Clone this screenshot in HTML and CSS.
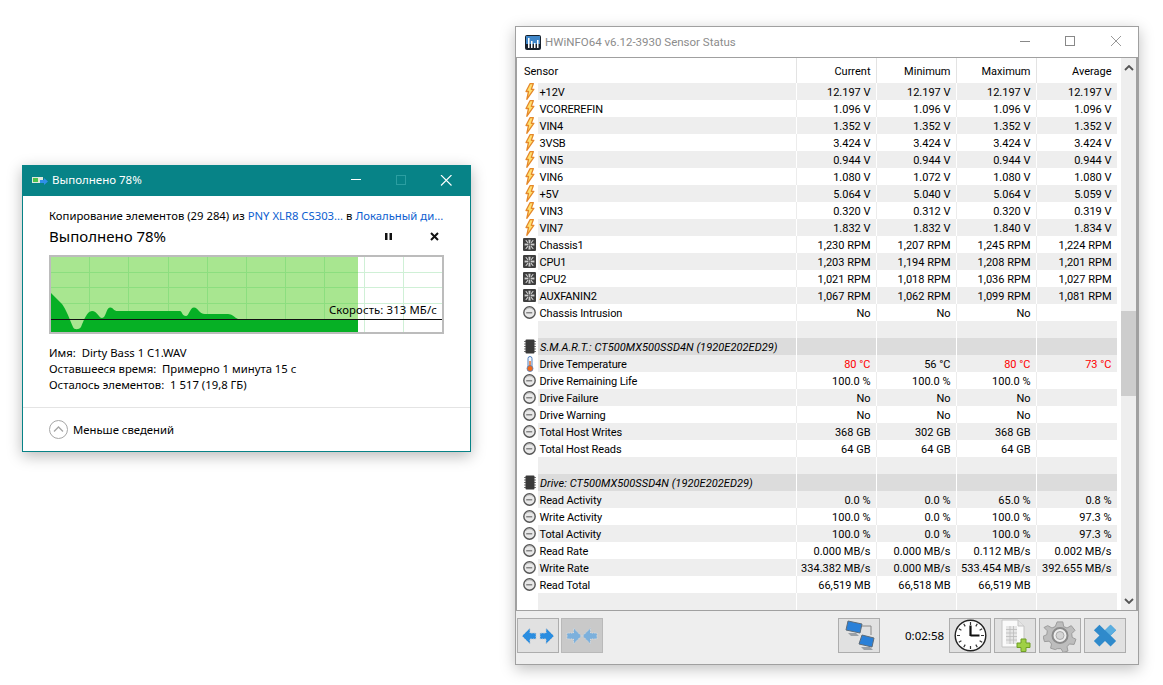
FILE: index.html
```html
<!DOCTYPE html>
<html lang="ru">
<head>
<meta charset="utf-8">
<title>Desktop</title>
<link rel="stylesheet" href="styles.css">
</head>
<body>
<svg class="defs" width="0" height="0" aria-hidden="true">
  <symbol id="bolt" viewBox="0 0 10 17"><path d="M5 .7 1 8.500h2.500L1.800 16.300 8.800 6.300H6.300L8.300 .7z" fill="#ffe070" stroke="#e5882a" stroke-width="1.300" stroke-linejoin="round"/></symbol>
  <symbol id="fan" viewBox="0 0 12 12"><rect width="12" height="12" rx="1" fill="#3f3f3f"/><g fill="#cfcfcf"><path d="M5 1.500h2L6.600 5H5.400zM5 10.500h2L6.600 7H5.400zM1.500 5v2L5 6.600V5.400zM10.500 5v2L7 6.600V5.400z"/><path d="M2 2h1.500L5 4.500 4.500 5zM10 2H8.500L7 4.500 7.500 5zM2 10h1.500L5 7.500 4.500 7zM10 10H8.500L7 7.500 7.500 7z"/></g><circle cx="6" cy="6" r="1" fill="#777"/></symbol>
  <symbol id="gauge" viewBox="0 0 13 13"><circle cx="6.500" cy="6.500" r="5.700" fill="#e8e8e8" stroke="#565656" stroke-width="1.400"/><path d="M3.200 6.800h6" stroke="#666" stroke-width="1.100"/><path d="M3 3.300a5 5 0 0 1 7 0" fill="none" stroke="#aaa" stroke-width=".9"/></symbol>
  <symbol id="chip" viewBox="0 0 12 15"><path d="M0 2.500h12M0 5h12M0 7.500h12M0 10h12M0 12.500h12" stroke="#777"/><rect x="1.500" y=".5" width="9" height="14" rx="1" fill="#3a3a3a"/></symbol>
  <symbol id="thermo" viewBox="0 0 8 16"><rect x="2" y=".5" width="4" height="11" rx="2" fill="#f2f6fb" stroke="#4f7fbe"/><rect x="3.300" y="5" width="1.400" height="7" fill="#e8641a"/><circle cx="4" cy="12.500" r="3" fill="#ef6a1c" stroke="#4f7fbe" stroke-width=".8"/></symbol>
</svg>

<section class="copy-win">
  <header class="copy-title">
    <svg class="copy-ico" width="16" height="10" viewBox="0 0 16 10"><rect y="1" width="11" height="6" fill="#dfe8dc"/><rect x="1" y="2" width="5" height="4" fill="#4cc24c"/><path d="M8 4h4V2l4 3.500-4 3.500V7H8z" fill="#2f8fe8"/></svg>
    <span class="copy-title-text">Выполнено 78%</span>
    <svg class="copy-ctl" width="101" height="12" viewBox="0 0 101 12"><path d="M0 4.500h10" stroke="#fff"/><rect x="45.500" y=".5" width="9" height="9" fill="none" stroke="#2b9ea1"/><path d="M90 0l10.500 10.500M100.500 0 90 10.500" stroke="#fff" stroke-width="1.100"/></svg>
  </header>
  <div class="copy-body">
    <div class="copy-line">Копирование элементов (29 284) из <span class="link">PNY XLR8 CS303...</span> в <span class="link">Локальный ди...</span></div>
    <div class="copy-head">
      <span class="copy-pct">Выполнено 78%</span>
      <svg class="pause-stop" width="55" height="9" viewBox="0 0 55 9"><path d="M0 1h2.500v7H0zM4.500 1H7v7H4.500z" fill="#111"/><path d="M46 1l7 7M53 1l-7 7" stroke="#111" stroke-width="2"/></svg>
    </div>
    <div class="chart">
      <svg class="chart-svg" width="391" height="75" viewBox="51 257 391 75">
        <rect x="51" y="257" width="391" height="75" fill="#fff"/>
        <rect x="51" y="257" width="307" height="75" fill="#a8e690"/>
        <path d="M89.500 257v75M128.500 257v75M168.500 257v75M207.500 257v75M246.500 257v75M285.500 257v75M324.500 257v75M51 272.500h307M51 287.500h307M51 303.500h307" stroke="#8cde7f" fill="none"/>
        <path d="M364.500 257v75M403.500 257v75M358 272.500h84M358 287.500h84M358 303.500h84" stroke="#cff0d6" fill="none"/>
        <path d="M51 293L62 304C66 309 70 320 73 327C74 330 79 330 81 327C84 320 87 311 92 311C97 311 99 318 102 318C106 318 106 308 110 307.500C113 307 113 311 118 311H180C182 311 182 316 186 316C189 316 190 307.500 194 307.500C198 307.500 199 314 205 314H228C232 314 234 317 238 319H358V332H51z" fill="#06b025"/>
        <path d="M51 319.500h391" stroke="#111"/>
      </svg>
      <span class="speed">Скорость: 313 МБ/с</span>
    </div>
    <div class="info">
      <div>Имя:&nbsp; Dirty Bass 1 C1.WAV</div>
      <div>Оставшееся время:&nbsp; Примерно 1 минута 15 с</div>
      <div>Осталось элементов:&nbsp; 1 517 (19,8 ГБ)</div>
    </div>
  </div>
  <footer class="copy-foot">
    <svg width="19" height="19" viewBox="0 0 19 19"><circle cx="9.500" cy="9.500" r="9" fill="#fff" stroke="#a6a6a6"/><path d="M5 11.500l4.500-4.500 4.500 4.500" fill="none" stroke="#a6a6a6" stroke-width="1.300"/></svg>
    <span>Меньше сведений</span>
  </footer>
</section>

<section class="hw-win">
  <header class="hw-title">
    <svg class="hw-logo" width="16" height="15" viewBox="0 0 16 15"><rect width="16" height="15" rx="2" fill="#17212c"/><rect x="1" y="1" width="14" height="8" fill="#3f86c8"/><path d="M3 3h1.500v10H3zM6 6h1.500v7H6zM9 8h1.500v5H9zM12 5h1.500v8H12z" fill="#fff"/></svg>
    <span class="hw-title-text">HWiNFO64 v6.12-3930 Sensor Status</span>
    <svg class="hw-ctl" width="101" height="12" viewBox="0 0 101 12"><path d="M0 5.500h10" stroke="#888"/><rect x="45.500" y=".5" width="9" height="9" fill="none" stroke="#888"/><path d="M91 0l10 10M101 0 91 10" stroke="#999"/></svg>
  </header>
  <div class="hw-list">
    <div class="hw-table">
      <div class="row head"><span class="ic"></span><span class="nm">Sensor</span><span class="v">Current</span><span class="v">Minimum</span><span class="v">Maximum</span><span class="v">Average</span></div>
      <div class="row even"><span class="ic"><svg class="i-bolt"><use href="#bolt"/></svg></span><span class="nm">+12V</span><span class="v">12.197 V</span><span class="v">12.197 V</span><span class="v">12.197 V</span><span class="v">12.197 V</span></div>
      <div class="row"><span class="ic"><svg class="i-bolt"><use href="#bolt"/></svg></span><span class="nm">VCOREREFIN</span><span class="v">1.096 V</span><span class="v">1.096 V</span><span class="v">1.096 V</span><span class="v">1.096 V</span></div>
      <div class="row even"><span class="ic"><svg class="i-bolt"><use href="#bolt"/></svg></span><span class="nm">VIN4</span><span class="v">1.352 V</span><span class="v">1.352 V</span><span class="v">1.352 V</span><span class="v">1.352 V</span></div>
      <div class="row"><span class="ic"><svg class="i-bolt"><use href="#bolt"/></svg></span><span class="nm">3VSB</span><span class="v">3.424 V</span><span class="v">3.424 V</span><span class="v">3.424 V</span><span class="v">3.424 V</span></div>
      <div class="row even"><span class="ic"><svg class="i-bolt"><use href="#bolt"/></svg></span><span class="nm">VIN5</span><span class="v">0.944 V</span><span class="v">0.944 V</span><span class="v">0.944 V</span><span class="v">0.944 V</span></div>
      <div class="row"><span class="ic"><svg class="i-bolt"><use href="#bolt"/></svg></span><span class="nm">VIN6</span><span class="v">1.080 V</span><span class="v">1.072 V</span><span class="v">1.080 V</span><span class="v">1.080 V</span></div>
      <div class="row even"><span class="ic"><svg class="i-bolt"><use href="#bolt"/></svg></span><span class="nm">+5V</span><span class="v">5.064 V</span><span class="v">5.040 V</span><span class="v">5.064 V</span><span class="v">5.059 V</span></div>
      <div class="row"><span class="ic"><svg class="i-bolt"><use href="#bolt"/></svg></span><span class="nm">VIN3</span><span class="v">0.320 V</span><span class="v">0.312 V</span><span class="v">0.320 V</span><span class="v">0.319 V</span></div>
      <div class="row even"><span class="ic"><svg class="i-bolt"><use href="#bolt"/></svg></span><span class="nm">VIN7</span><span class="v">1.832 V</span><span class="v">1.832 V</span><span class="v">1.840 V</span><span class="v">1.834 V</span></div>
      <div class="row"><span class="ic"><svg class="i-sq"><use href="#fan"/></svg></span><span class="nm">Chassis1</span><span class="v">1,230 RPM</span><span class="v">1,207 RPM</span><span class="v">1,245 RPM</span><span class="v">1,224 RPM</span></div>
      <div class="row even"><span class="ic"><svg class="i-sq"><use href="#fan"/></svg></span><span class="nm">CPU1</span><span class="v">1,203 RPM</span><span class="v">1,194 RPM</span><span class="v">1,208 RPM</span><span class="v">1,201 RPM</span></div>
      <div class="row"><span class="ic"><svg class="i-sq"><use href="#fan"/></svg></span><span class="nm">CPU2</span><span class="v">1,021 RPM</span><span class="v">1,018 RPM</span><span class="v">1,036 RPM</span><span class="v">1,027 RPM</span></div>
      <div class="row even"><span class="ic"><svg class="i-sq"><use href="#fan"/></svg></span><span class="nm">AUXFANIN2</span><span class="v">1,067 RPM</span><span class="v">1,062 RPM</span><span class="v">1,099 RPM</span><span class="v">1,081 RPM</span></div>
      <div class="row"><span class="ic"><svg class="i-sq"><use href="#gauge"/></svg></span><span class="nm">Chassis Intrusion</span><span class="v">No</span><span class="v">No</span><span class="v">No</span><span class="v"></span></div>
      <div class="row even"><span class="ic"></span><span class="nm"></span><span class="v"></span><span class="v"></span><span class="v"></span><span class="v"></span></div>
      <div class="row group"><span class="ic"><svg class="i-chip"><use href="#chip"/></svg></span><span class="nm">S.M.A.R.T.: CT500MX500SSD4N (1920E202ED29)</span><span class="v"></span><span class="v"></span><span class="v"></span><span class="v"></span></div>
      <div class="row even"><span class="ic"><svg class="i-thermo"><use href="#thermo"/></svg></span><span class="nm">Drive Temperature</span><span class="v hot">80 °C</span><span class="v">56 °C</span><span class="v hot">80 °C</span><span class="v hot">73 °C</span></div>
      <div class="row"><span class="ic"><svg class="i-sq"><use href="#gauge"/></svg></span><span class="nm">Drive Remaining Life</span><span class="v">100.0 %</span><span class="v">100.0 %</span><span class="v">100.0 %</span><span class="v"></span></div>
      <div class="row even"><span class="ic"><svg class="i-sq"><use href="#gauge"/></svg></span><span class="nm">Drive Failure</span><span class="v">No</span><span class="v">No</span><span class="v">No</span><span class="v"></span></div>
      <div class="row"><span class="ic"><svg class="i-sq"><use href="#gauge"/></svg></span><span class="nm">Drive Warning</span><span class="v">No</span><span class="v">No</span><span class="v">No</span><span class="v"></span></div>
      <div class="row even"><span class="ic"><svg class="i-sq"><use href="#gauge"/></svg></span><span class="nm">Total Host Writes</span><span class="v">368 GB</span><span class="v">302 GB</span><span class="v">368 GB</span><span class="v"></span></div>
      <div class="row"><span class="ic"><svg class="i-sq"><use href="#gauge"/></svg></span><span class="nm">Total Host Reads</span><span class="v">64 GB</span><span class="v">64 GB</span><span class="v">64 GB</span><span class="v"></span></div>
      <div class="row even"><span class="ic"></span><span class="nm"></span><span class="v"></span><span class="v"></span><span class="v"></span><span class="v"></span></div>
      <div class="row group"><span class="ic"><svg class="i-chip"><use href="#chip"/></svg></span><span class="nm">Drive: CT500MX500SSD4N (1920E202ED29)</span><span class="v"></span><span class="v"></span><span class="v"></span><span class="v"></span></div>
      <div class="row even"><span class="ic"><svg class="i-sq"><use href="#gauge"/></svg></span><span class="nm">Read Activity</span><span class="v">0.0 %</span><span class="v">0.0 %</span><span class="v">65.0 %</span><span class="v">0.8 %</span></div>
      <div class="row"><span class="ic"><svg class="i-sq"><use href="#gauge"/></svg></span><span class="nm">Write Activity</span><span class="v">100.0 %</span><span class="v">0.0 %</span><span class="v">100.0 %</span><span class="v">97.3 %</span></div>
      <div class="row even"><span class="ic"><svg class="i-sq"><use href="#gauge"/></svg></span><span class="nm">Total Activity</span><span class="v">100.0 %</span><span class="v">0.0 %</span><span class="v">100.0 %</span><span class="v">97.3 %</span></div>
      <div class="row"><span class="ic"><svg class="i-sq"><use href="#gauge"/></svg></span><span class="nm">Read Rate</span><span class="v">0.000 MB/s</span><span class="v">0.000 MB/s</span><span class="v">0.112 MB/s</span><span class="v">0.002 MB/s</span></div>
      <div class="row even"><span class="ic"><svg class="i-sq"><use href="#gauge"/></svg></span><span class="nm">Write Rate</span><span class="v">334.382 MB/s</span><span class="v">0.000 MB/s</span><span class="v">533.454 MB/s</span><span class="v">392.655 MB/s</span></div>
      <div class="row"><span class="ic"><svg class="i-sq"><use href="#gauge"/></svg></span><span class="nm">Read Total</span><span class="v">66,519 MB</span><span class="v">66,518 MB</span><span class="v">66,519 MB</span><span class="v"></span></div>
      <div class="row even"><span class="ic"></span><span class="nm"></span><span class="v"></span><span class="v"></span><span class="v"></span><span class="v"></span></div>
    </div>
    <div class="scroll">
      <svg class="sc-arrow" width="10" height="6" viewBox="0 0 10 6"><path d="M1 5l4-4 4 4" fill="none" stroke="#555" stroke-width="1.800"/></svg>
      <div class="sc-track"><div class="sc-thumb"></div></div>
      <svg class="sc-arrow" width="10" height="6" viewBox="0 0 10 6"><path d="M1 1l4 4 4-4" fill="none" stroke="#555" stroke-width="1.800"/></svg>
    </div>
  </div>
  <div class="hw-bar">
    <button class="tb" type="button" aria-label="Expand"><svg width="34" height="20" viewBox="0 0 34 20"><path d="M1 10l8-8v5h6v6H9v5zM33 10l-8-8v5h-6v6h6v5z" fill="#2a8de0" stroke="#c4ccd4" stroke-width="1" stroke-dasharray="1.500 1"/></svg></button>
    <button class="tb off" type="button" aria-label="Collapse"><svg width="34" height="20" viewBox="0 0 34 20"><path d="M16.500 10l-8-8v5H2v6h6.500v5zM17.500 10l8-8v5H32v6h-6.500v5z" fill="#7cb0dc" stroke="#d6d9dc" stroke-width="1" stroke-dasharray="1.500 1"/></svg></button>
    <button class="tb net" type="button" aria-label="Network"><svg width="34" height="32" viewBox="0 0 34 32"><path d="M20 6h9v9" fill="none" stroke="#888"/><path d="M6 1l14 3-2 9-14-3z" fill="#2a80d8" stroke="#5d6b78"/><path d="M6 13h8l3 3H9z" fill="#9aa0a6"/><path d="M20 15l12 3-2 9-13-3z" fill="#2a80d8" stroke="#5d6b78"/><path d="M19 27h9l3 3H22z" fill="#9aa0a6"/></svg></button>
    <span class="timer">0:02:58</span>
    <button class="tb" type="button" aria-label="Clock"><svg width="33" height="33" viewBox="0 0 33 33"><circle cx="16.500" cy="16.500" r="15.300" fill="#fff" stroke="#222" stroke-width="1.400"/><path d="M16.500 3v3M16.500 27v3M3 16.500h3M27 16.500h3M9.700 4.800l1.500 2.600M23.300 4.800l-1.500 2.600M4.800 9.700l2.600 1.500M28.200 9.700l-2.600 1.500M4.800 23.300l2.600-1.500M28.200 23.300l-2.600-1.500M9.700 28.200l1.500-2.600M23.300 28.200l-1.500-2.600" stroke="#333" stroke-width="1.200"/><path d="M16.500 17V6.500M16.500 16.500h9" stroke="#111" stroke-width="2.200"/></svg></button>
    <button class="tb" type="button" aria-label="Report"><svg width="34" height="33" viewBox="0 0 34 33"><path d="M4 1h16l6 6v21H4z" fill="#fafafa" stroke="#c4c4c4"/><path d="M20 1v6h6" fill="#e4e4e4" stroke="#c4c4c4"/><path d="M8 7h11v18H8z" fill="#e6e6e6"/><path d="M8 10.500h11M8 14h11M8 17.500h11M8 21h11M12 7v18M15.500 7v18" stroke="#bbb" stroke-width=".8"/><path d="M23 20h5v4h4v4.500h-4V32.500h-5v-4h-4V24h4z" fill="#9fd045" stroke="#6f9e26"/></svg></button>
    <button class="tb" type="button" aria-label="Settings"><svg width="34" height="33" viewBox="0 0 34 33"><path d="M14 2h6l1 5 3.500 1.500L29 6l4 5-3.500 3.500.5 4 4 2-2 5.500-5-.5-2.500 3 1 4.500-5 1.500-2.500-4h-4L12 31.500 7 30l1-4.500-2.500-3-5 .5L-1 17.500l4-2 .5-4L0 8l4-2 4.500 2.500L12 7z" transform="translate(1 1) scale(.94)" fill="#bdbdbd" stroke="#999"/><circle cx="17" cy="16.500" r="7.500" fill="#eee" stroke="#8b8b8b" stroke-width="2"/><circle cx="17" cy="16.500" r="4" fill="#d5d5d5" stroke="#aaa"/></svg></button>
    <button class="tb" type="button" aria-label="Close"><svg width="24" height="23" viewBox="0 0 30 29"><path d="M8 1l7 7 7-7 7 7-7 6.500 7 7-7 7-7-7-7 7-7-7 7-7L1 8z" fill="#2f8acb"/><path d="M15 8l7-7 7 7-7 6.500z" fill="#5aaee0"/></svg></button>
  </div>
</section>
</body>
</html>
```
FILE: styles.css
```css
* { box-sizing: border-box; }
html, body { margin: 0; padding: 0; }
body {
  width: 1163px;
  height: 685px;
  position: relative;
  overflow: hidden;
  background: #fff;
  font-family: "Noto Sans", "Open Sans", sans-serif;
  font-size: 11.3px;
  color: #000;
}
.defs { position: absolute; }

/* copy dialog */
.copy-win {
  position: absolute;
  left: 22px;
  top: 165px;
  width: 449px;
  height: 287px;
  background: #fff;
  border: 1px solid #078387;
  box-shadow: 0 4px 14px rgba(0, 0, 0, .28);
  display: flex;
  flex-direction: column;
}
.copy-title {
  height: 30px;
  background: #078387;
  color: #fff;
  display: flex;
  align-items: center;
  padding-left: 9px;
  flex: none;
}
.copy-title-text { margin-left: 4px; font-size: 11.5px; line-height: 14px; padding-bottom: 2px; }
.copy-ctl { margin-left: auto; margin-right: 18px; }
.copy-body { padding: 12px 26px 0; flex: 1; }
.copy-line { line-height: 16px; white-space: nowrap; }
.link { color: #0b5ed0; }
.copy-head { margin-top: 2px; height: 20px; display: flex; align-items: center; justify-content: space-between; padding-right: 4px; }
.copy-pct { font-size: 15px; }
.chart {
  margin-top: 9px;
  width: 395px;
  height: 79px;
  border: 2px solid #bcbcbc;
  position: relative;
}
.chart-svg { display: block; }
.speed {
  position: absolute;
  right: 5px;
  top: 45px;
  line-height: 16px;
  letter-spacing: .15px;
}
.info { margin-top: 11px; line-height: 16px; }
.copy-foot {
  margin-top: 14px;
  height: 44px;
  border-top: 1px solid #e4e4e4;
  display: flex;
  align-items: center;
  gap: 5px;
  padding-left: 26px;
  flex: none;
}

/* sensor window */
.hw-win {
  position: absolute;
  left: 515px;
  top: 26px;
  width: 624px;
  height: 639px;
  background: #eee;
  border: 1px solid #a0a0a0;
  box-shadow: 0 4px 14px rgba(0, 0, 0, .25);
  display: flex;
  flex-direction: column;
  font-family: Roboto, "Noto Sans", sans-serif;
  font-size: 11px;
}
.hw-title {
  height: 30px;
  background: #fff;
  display: flex;
  align-items: center;
  padding-left: 9px;
  flex: none;
}
.hw-title-text { margin-left: 4px; font-size: 11.5px; color: #8c8c8c; }
.hw-ctl { margin-left: auto; margin-right: 17px; }
.hw-list {
  height: 554px;
  flex: none;
  border: 1px solid #a0a0a0;
  border-right-width: 2px;
  background: #fff;
  display: flex;
  overflow: hidden;
}
.hw-table { width: 600px; flex: none; }
.row {
  display: grid;
  grid-template-columns: 21px 258px 80px 80px 80px 81px;
  grid-template-rows: 17px;
  height: 17px;
  line-height: 19px;
  white-space: nowrap;
}
.row.head { height: 25px; line-height: 28px; grid-template-rows: 25px; }
.row.head .ic { display: none; }
.row.head { grid-template-columns: 279px 80px 80px 80px 81px; }
.row.head .nm { padding-left: 7px; letter-spacing: 0; }
.row.head .v { border-left: 1px solid #e3e3e3; }
.ic { background: #fff; display: flex; align-items: center; justify-content: center; padding-left: 4px; }
.nm { padding-left: 1.5px; letter-spacing: -.12px; }
.v { text-align: right; padding-right: 5.5px; border-left: 1px solid #ececec; }
.even .nm, .even .v { background: #eee; }
.even .v { border-left-color: #fff; }
.group .nm, .group .v { background: #dcdcdc; }
.group .v { border-left-color: #fff; }
.group .nm { font-style: italic; letter-spacing: .05px; padding-left: 2px; }
.hot { color: #f00; }
.i-bolt { width: 10px; height: 17px; overflow: visible; }
.i-sq { width: 13px; height: 13px; }
.i-chip { width: 12px; height: 15px; overflow: visible; }
.i-thermo { width: 8px; height: 16px; overflow: visible; }

.scroll {
  width: 20px;
  padding-left: 4px;
  display: flex;
  flex-direction: column;
  align-items: stretch;
  position: relative;
}
.sc-arrow { position: absolute; left: 7px; }
.sc-arrow:first-child { top: 7px; left: 7px; }
.sc-arrow:last-child { bottom: 6px; }
.sc-track { background: #eee; flex: 1; padding-top: 253px; }
.sc-thumb { height: 85px; background: #cdcdcd; }

.hw-bar {
  flex: 1;
  display: flex;
  align-items: flex-start;
  padding: 7px 0 0 1px;
}
.tb {
  width: 42px;
  height: 35px;
  padding: 0;
  margin: 0;
  background: #e1e1e1;
  border: 1px solid #adadad;
  display: flex;
  align-items: center;
  justify-content: center;
  flex: none;
}
.tb + .tb { margin-left: 3px; }
.tb svg { display: block; }
.tb.off { margin-left: 2px; background: #c9c9c9; border-color: #b9b9b9; }
.tb.net { margin-left: 235px; background: #e1e1e1; }
.timer { margin-left: 25px; width: 44px; line-height: 35px; flex: none; font-family: "Noto Sans", sans-serif; font-size: 11.500px; }
```
